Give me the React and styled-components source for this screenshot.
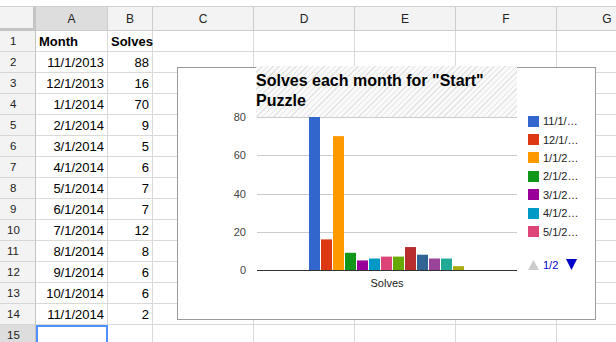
import React from "react";
import styled, { createGlobalStyle } from "styled-components";

const Global = createGlobalStyle`
  html, body { margin: 0; padding: 0; background: #fff; }
  body { font-family: Arial, "Liberation Sans", sans-serif; overflow: hidden; }
`;

const Page = styled.div`
  position: relative;
  width: 616px;
  height: 342px;
  overflow: hidden;
  padding-top: 6px;
  box-sizing: border-box;
`;

const Sheet = styled.div`
  display: grid;
  grid-template-columns: 36px 72px 45px 101px 101px 101px 101px 101px;
  grid-template-rows: 24px;
  grid-auto-rows: 21px;
  border-top: 1px solid #cfcfcf;
  width: 658px;
`;

const HeadCell = styled.div`
  box-sizing: border-box;
  background: ${(p) => (p.$active ? "#dddddd" : "#f3f3f3")};
  border-right: 1px solid #cccccc;
  border-bottom: 1px solid #cccccc;
  display: flex;
  align-items: center;
  justify-content: center;
  font-size: 12px;
  color: #222;
`;

const Corner = styled(HeadCell)`
  border-right: 3px solid #c4c4c4;
  border-bottom: 3px solid #c4c4c4;
`;

const RowHead = styled(HeadCell)`
  font-size: 11.5px;
  justify-content: flex-start;
  padding-left: ${(p) => (p.$wide ? 7 : 10)}px;
  border-right: 1px solid #c4c4c4;
  border-bottom: 1px solid #d6d6d6;
`;

const Cell = styled.div`
  box-sizing: border-box;
  border-right: 1px solid #dadada;
  border-bottom: 1px solid #dadada;
  display: flex;
  align-items: center;
  justify-content: ${(p) => (p.$right ? "flex-end" : "flex-start")};
  padding: 0 3px;
  font-size: 13px;
  font-weight: ${(p) => (p.$bold ? 700 : 400)};
  color: #000;
  white-space: nowrap;
  position: relative;
  ${(p) =>
    p.$selected &&
    `outline: 2px solid #4d90fe; outline-offset: -2px; z-index: 1;`}
`;

const ChartBox = styled.div`
  position: absolute;
  left: 177px;
  top: 67px;
  width: 419px;
  height: 253px;
  box-sizing: border-box;
  border: 1px solid #9a9a9a;
  background: #fff;
  display: flex;
`;

const TitleOverlay = styled.div`
  position: absolute;
  left: 78px;
  top: -2px;
  width: 261px;
  height: 51px;
  box-sizing: border-box;
  padding-top: 5px;
  background: repeating-linear-gradient(
    135deg,
    #e4e4e4 0px,
    #e4e4e4 1px,
    #f9f9f9 1px,
    #f9f9f9 4px
  );
  font-size: 16px;
  font-weight: 700;
  line-height: 20px;
  color: #000;
  white-space: pre-line;
`;

const Legend = styled.div`
  display: flex;
  flex-direction: column;
  padding-left: 5px;
  padding-top: 44px;
`;

const LegendItem = styled.div`
  display: flex;
  align-items: center;
  gap: 4px;
  height: 18.4px;
  font-size: 11px;
  color: #222;
`;

const Swatch = styled.span`
  display: inline-block;
  width: 11px;
  height: 11px;
  background: ${(p) => p.$color};
`;

const Pager = styled.div`
  display: flex;
  align-items: center;
  gap: 4px;
  height: 18px;
  margin-top: 15px;
  font-size: 11px;
  color: #0000cc;
`;

const PageText = styled.span`
  margin-right: 4px;
`;

const rows = [
  ["Month", "Solves"],
  ["11/1/2013", 88],
  ["12/1/2013", 16],
  ["1/1/2014", 70],
  ["2/1/2014", 9],
  ["3/1/2014", 5],
  ["4/1/2014", 6],
  ["5/1/2014", 7],
  ["6/1/2014", 7],
  ["7/1/2014", 12],
  ["8/1/2014", 8],
  ["9/1/2014", 6],
  ["10/1/2014", 6],
  ["11/1/2014", 2],
  ["", ""],
];

const colors = [
  "#3366cc",
  "#dc3912",
  "#ff9900",
  "#109618",
  "#990099",
  "#0099c6",
  "#dd4477",
  "#66aa00",
  "#b82e2e",
  "#316395",
  "#994499",
  "#22aa99",
  "#aaaa11",
];

const cols = ["A", "B", "C", "D", "E", "F", "G"];

function Plot() {
  const base = 202;
  const scale = 153 / 80;
  const ticks = [0, 20, 40, 60, 80];
  const values = rows.slice(1, 14).map((r) => r[1]);
  return (
    <svg width="345" height="251" style={{ display: "block", flex: "none" }}>
      {ticks.map((t) => {
        const y = Math.round(base - t * scale);
        return (
          <g key={t}>
            {t !== 0 && (
              <line x1="79" x2="339" y1={y + 0.5} y2={y + 0.5} stroke="#cccccc" />
            )}
            <text
              x="68"
              y={y + 4}
              textAnchor="end"
              fontSize="11"
              fontFamily="Arial, 'Liberation Sans', sans-serif"
              fill="#444"
            >
              {t}
            </text>
          </g>
        );
      })}
      {values.map((v, i) => {
        const h = Math.min(v * scale, 153);
        return (
          <rect
            key={i}
            x={131 + i * 12}
            y={base - h}
            width="11"
            height={h}
            fill={colors[i]}
          />
        );
      })}
      <line x1="79" x2="339" y1={base + 0.5} y2={base + 0.5} stroke="#333" />
      <text
        x="209"
        y="219"
        textAnchor="middle"
        fontSize="11"
        fontFamily="Arial, 'Liberation Sans', sans-serif"
        fill="#222"
      >
        Solves
      </text>
    </svg>
  );
}

function Chart() {
  const legend = ["11/1/…", "12/1/…", "1/1/2…", "2/1/2…", "3/1/2…", "4/1/2…", "5/1/2…"];
  return (
    <ChartBox>
      <Plot />
      <Legend>
        {legend.map((l, i) => (
          <LegendItem key={l}>
            <Swatch $color={colors[i]} />
            {l}
          </LegendItem>
        ))}
        <Pager>
          <svg width="11" height="10">
            <polygon points="0,10 5.5,0 11,10" fill="#cccccc" />
          </svg>
          <PageText>1/2</PageText>
          <svg width="11" height="11">
            <polygon points="0,0 11,0 5.5,11" fill="#0000cc" />
          </svg>
        </Pager>
      </Legend>
      <TitleOverlay>{'Solves each month for "Start"\nPuzzle'}</TitleOverlay>
    </ChartBox>
  );
}

export default function App() {
  return (
    <>
      <Global />
      <Page>
        <Sheet>
          <Corner />
          {cols.map((c) => (
            <HeadCell key={c} $active={c === "A"}>
              {c}
            </HeadCell>
          ))}
          {rows.map((r, i) => {
            const n = i + 1;
            const header = i === 0;
            return (
              <React.Fragment key={n}>
                <RowHead $active={n === 15} $wide={n >= 10}>
                  {n}
                </RowHead>
                <Cell $bold={header} $right={!header} $selected={n === 15}>
                  {r[0]}
                </Cell>
                <Cell $bold={header} $right={!header}>
                  {r[1]}
                </Cell>
                <Cell />
                <Cell />
                <Cell />
                <Cell />
                <Cell />
              </React.Fragment>
            );
          })}
        </Sheet>
        <Chart />
      </Page>
    </>
  );
}
